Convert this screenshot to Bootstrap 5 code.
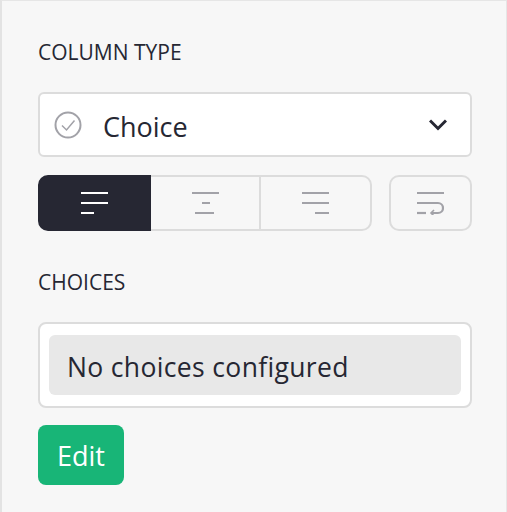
<!DOCTYPE html>
<html lang="en"><head><meta charset="utf-8">
<link href="https://cdn.jsdelivr.net/npm/bootstrap@5.3.0/dist/css/bootstrap.min.css" rel="stylesheet">
<style>
html,body{height:100%;}
body{background:#f7f7f7;color:#262733;font-family:"Open Sans","Noto Sans",sans-serif;overflow:hidden;}
.panel{height:512px;border-left:2px solid #e3e3e3;border-top:1px solid #e6e6e6;border-right:1px solid #e6e6e6;padding:38px 34px 0 36px;}
.lbl{font-size:21px;line-height:26px;margin:0;}
.typesel{margin-top:27px;height:65px;background:#fff;border:2px solid #dcdcdc;border-radius:6px;padding:0 23px 0 14px;font-size:27px;}
.typesel span{margin-left:21px;padding-top:5px;}
.tools{margin-top:18px;height:56px;gap:17px;}
.tools .btn{background:#f7f7f7;border:2px solid #dcdcdc;border-radius:0;padding:0;display:flex;align-items:center;justify-content:center;height:56px;}
.tools .btn-group .btn:first-child{background:#262733;border-color:#262733;width:113px;flex:none;border-radius:10px 0 0 10px;}
.tools .btn-group .btn:nth-child(2){width:108px;flex:none;margin-left:0;border-left:0;border-right:0;}
.tools .btn-group .btn:nth-child(3){width:113px;flex:none;margin-left:0;border-radius:0 10px 10px 0;}
.tools .wrapb{width:83px;border-radius:10px;}
.choicelbl{margin-top:38px;}
.choicebox{margin-top:27px;height:86px;background:#fff;border:2px solid #dcdcdc;border-radius:8px;padding:11px 9px;}
.emptymsg{height:60px;background:#e8e8e8;border-radius:6px;padding:5px 18px 0;font-size:26.5px;display:flex;align-items:center;letter-spacing:.35px;}
.editb{margin-top:17px;height:60px;width:86px;background:#18b577;border:0;border-radius:8px;color:#fff;font-size:27px;padding:2px 0 0;}
.editb:hover{background:#18b577;color:#fff;}
svg{display:block;}
</style></head><body>
<div class="panel">
<p class="lbl">COLUMN TYPE</p>
<div class="typesel d-flex align-items-center">
<svg width="28" height="28" viewBox="0 0 28 28" fill="none" stroke="#a2a2a8" stroke-width="2"><circle cx="14" cy="14" r="12.500"/><path d="M8 14.500l4.500 4.500 8-9.500" stroke-width="1.500"/></svg>
<span>Choice</span>
<svg class="ms-auto" width="18" height="12" viewBox="0 0 18 12" fill="none" stroke="#262733" stroke-width="3"><path d="M1 1.500l8 8 8-8"/></svg>
</div>
<div class="tools d-flex">
<div class="btn-group">
<button class="btn" type="button" aria-label="Left"><svg width="27" height="22" viewBox="0 0 27 22" stroke="#fff" stroke-width="2.200"><path d="M0 1h27M0 11h27M0 21h13"/></svg></button>
<button class="btn" type="button" aria-label="Center"><svg width="27" height="22" viewBox="0 0 27 22" stroke="#a2a2a8" stroke-width="2.200"><path d="M0 1h27M10 11h8M3 21h19"/></svg></button>
<button class="btn" type="button" aria-label="Right"><svg width="27" height="22" viewBox="0 0 27 22" stroke="#a2a2a8" stroke-width="2.200"><path d="M0 1h27M0 11h27M13 21h14"/></svg></button>
</div>
<button class="btn wrapb" type="button" aria-label="Wrap"><svg width="27" height="24" viewBox="0 0 27 24" fill="none" stroke="#a2a2a8" stroke-width="2.200"><path d="M0 2h27M0 12h21a5 5 0 0 1 0 10h-7"/><path d="M0 22h9"/><path d="M17 19l-3 3 3 3" stroke-width="1.600"/></svg></button>
</div>
<p class="lbl choicelbl">CHOICES</p>
<div class="choicebox"><div class="emptymsg">No choices configured</div></div>
<button class="btn editb d-block" type="button">Edit</button>
</div>
</body></html>
